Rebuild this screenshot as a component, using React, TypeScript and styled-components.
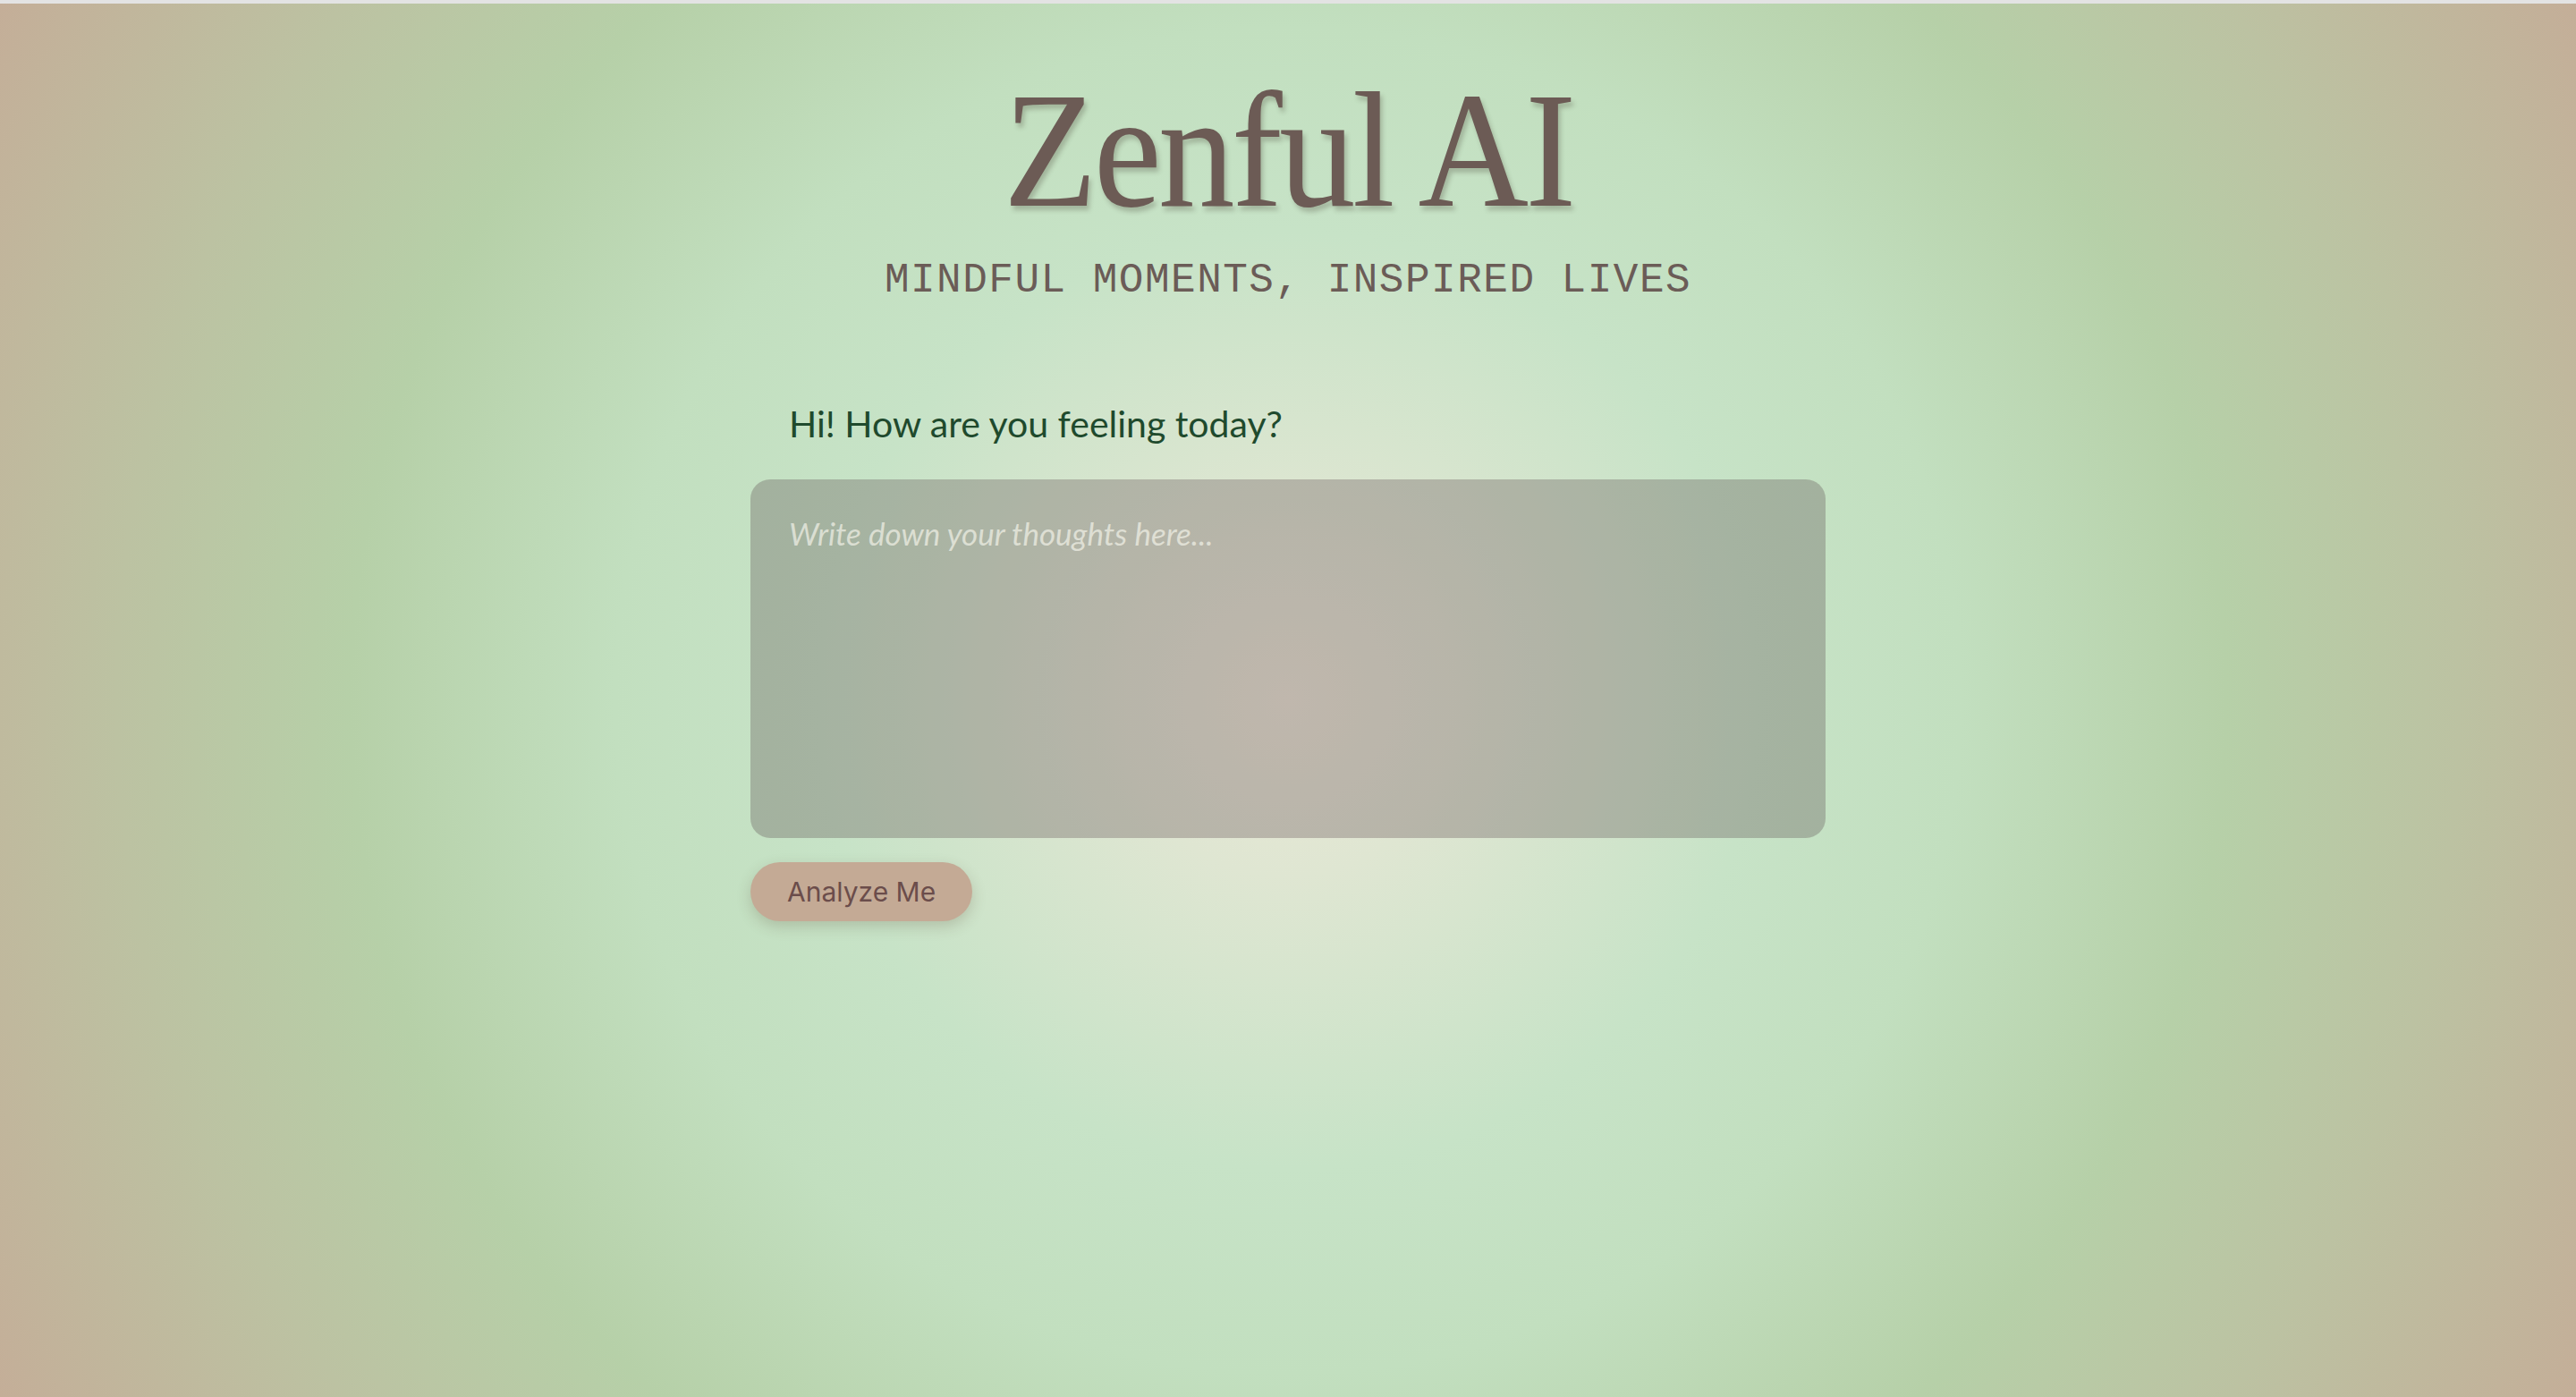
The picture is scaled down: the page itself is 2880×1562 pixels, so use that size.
import React from "react";
import styled, { createGlobalStyle } from "styled-components";

const App = () => {
  return (
    <>
      <GlobalStyle />
      <Page>
        <Header>
          <Title>Zenful AI</Title>
          <Tagline>MINDFUL MOMENTS, INSPIRED LIVES</Tagline>
        </Header>

        <Journal>
          <Prompt>Hi! How are you feeling today?</Prompt>
          <Entry placeholder="Write down your thoughts here..." />
          <AnalyzeButton type="button">Analyze Me</AnalyzeButton>
        </Journal>
      </Page>
    </>
  );
};

export default App;

const GlobalStyle = createGlobalStyle`
  html, body {
    margin: 0;
    padding: 0;
    height: 100%;
  }

  #root {
    min-height: 100%;
  }

  * {
    box-sizing: border-box;
  }
`;

const Page = styled.div`
  min-height: 100vh;
  border-top: 4px solid #e3e3e3;
  display: flex;
  flex-direction: column;
  align-items: center;
  background: radial-gradient(
    circle farthest-corner at 50% 50%,
    #ebe8d7 0%,
    #dfe6d2 12%,
    #c7e3c7 32%,
    #c2dfbf 46%,
    #b6d0a8 64%,
    #bcc2a2 80%,
    #c4ae98 100%
  );
`;

const Header = styled.header`
  display: flex;
  flex-direction: column;
  align-items: center;
  padding-top: 72px;
`;

const Title = styled.h1`
  margin: 0;
  font-family: "Liberation Serif", "Times New Roman", serif;
  font-weight: 400;
  font-size: 184px;
  line-height: 1;
  letter-spacing: -4px;
  color: #6c5b55;
  transform: scaleX(0.93);
  text-shadow: 3px 5px 6px rgba(60, 50, 40, 0.25);
`;

const Tagline = styled.p`
  margin: 31px 0 0;
  font-family: "Liberation Mono", "Courier New", monospace;
  font-size: 46px;
  line-height: 1;
  letter-spacing: 1.5px;
  color: #6b5c57;
`;

const Journal = styled.main`
  width: 1202px;
  margin-top: 112px;
  display: flex;
  flex-direction: column;
  align-items: flex-start;
`;

const Prompt = styled.h2`
  margin: 0;
  padding-left: 43px;
  font-family: Lato, "Open Sans", sans-serif;
  font-weight: 400;
  font-size: 41px;
  line-height: 1.2;
  color: #1f4a2d;
`;

const Entry = styled.textarea`
  width: 100%;
  height: 401px;
  margin-top: 38px;
  padding: 39px 43px;
  border: none;
  border-radius: 22px;
  resize: none;
  outline: none;
  background: rgba(62, 36, 48, 0.25);
  font-family: Lato, "Open Sans", sans-serif;
  font-size: 35px;
  line-height: 1.2;
  color: #3b3b36;

  &::placeholder {
    font-style: italic;
    color: rgba(240, 240, 230, 0.72);
  }
`;

const AnalyzeButton = styled.button`
  margin-top: 27px;
  height: 66px;
  padding: 0 41px;
  border: none;
  border-radius: 33px;
  background: #c4aa95;
  box-shadow: 0 6px 16px rgba(90, 70, 50, 0.22);
  font-family: Inter, "Liberation Sans", sans-serif;
  font-size: 30px;
  color: #6b4d4b;
  cursor: pointer;
`;
